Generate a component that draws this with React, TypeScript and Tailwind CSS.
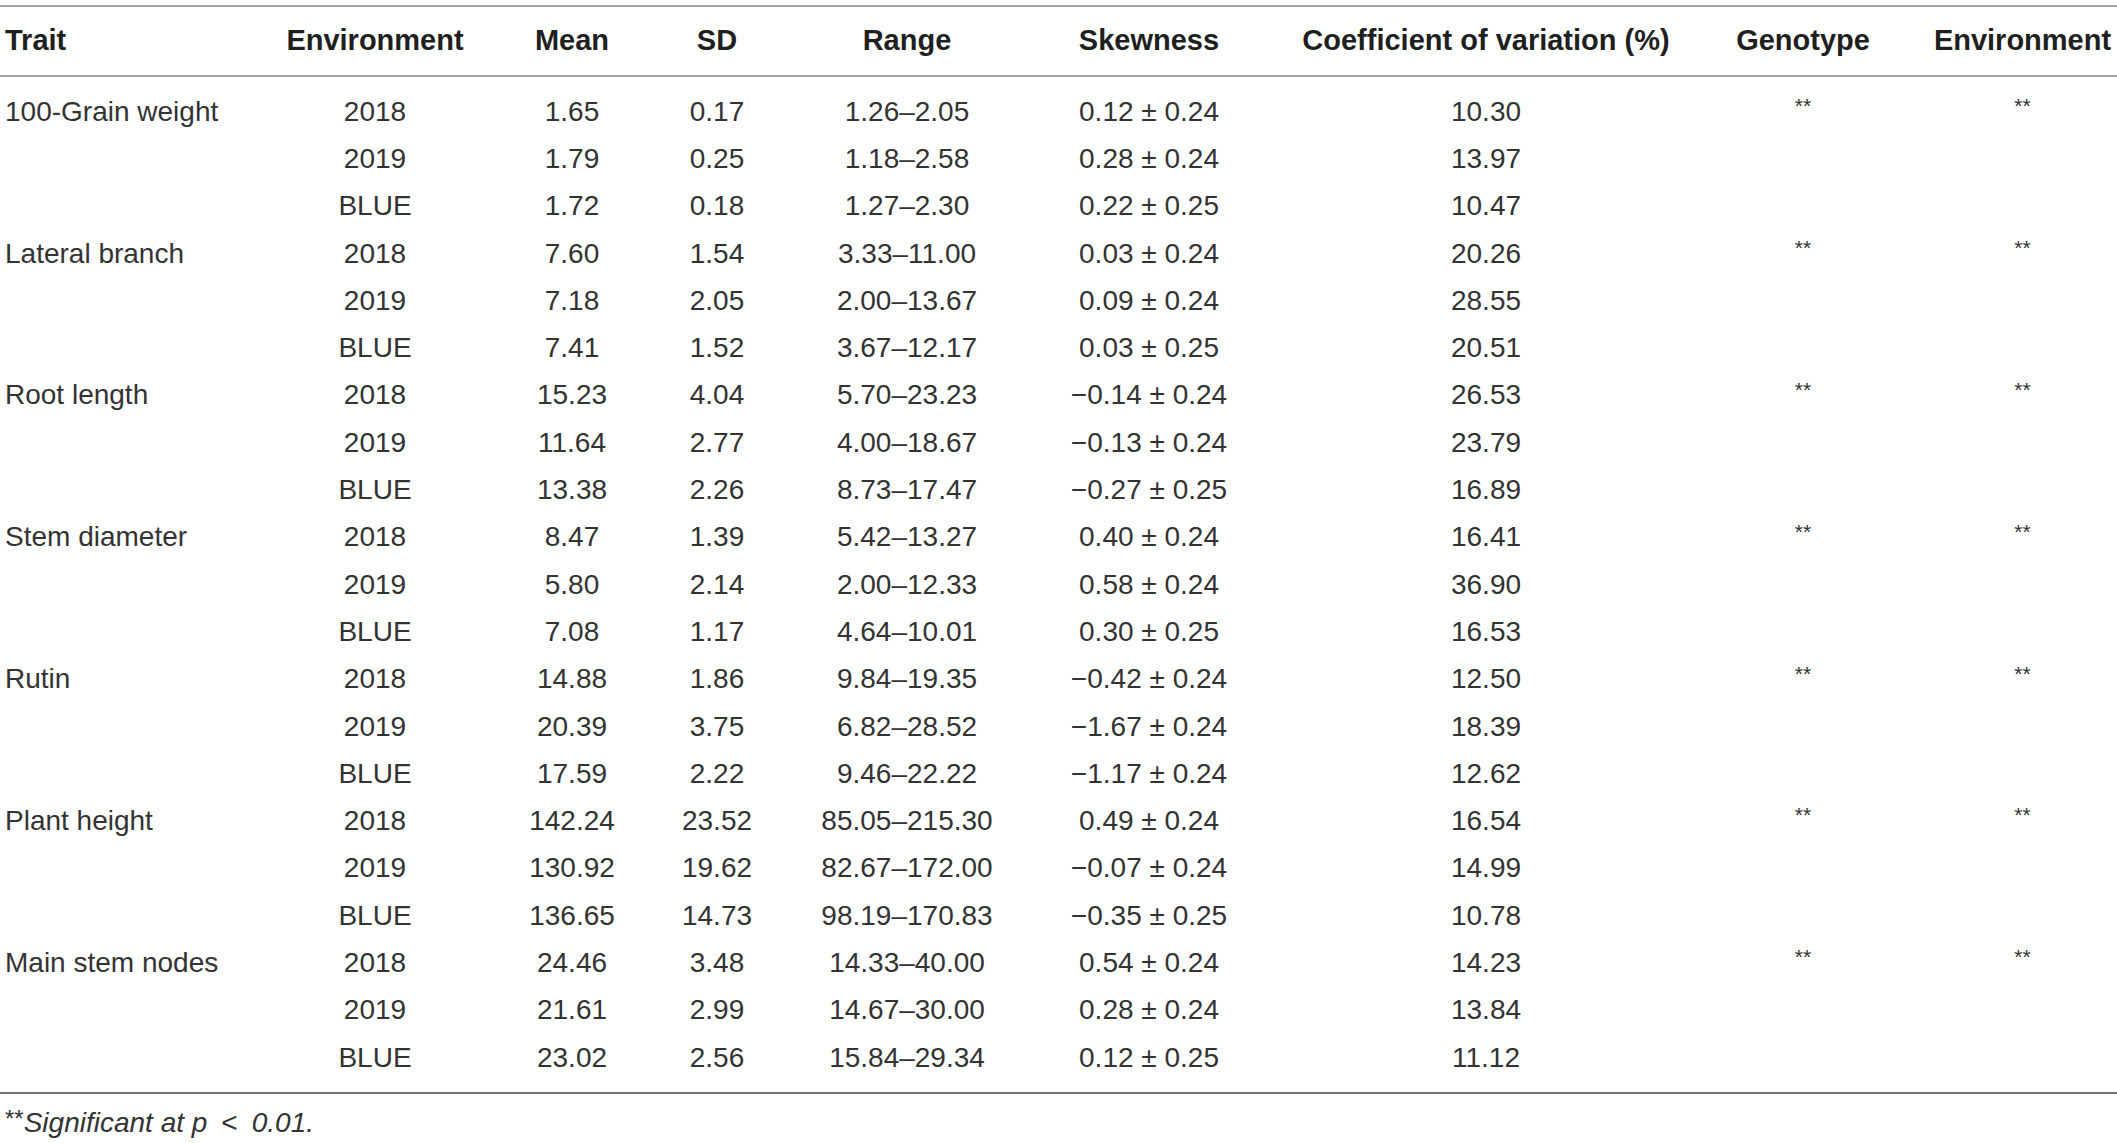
import React from 'react';

type Row = {
  trait?: string;
  env: string;
  mean: string;
  sd: string;
  range: string;
  skew: string;
  cv: string;
};

const mk = (trait: string, rows: string[][]): Row[] =>
  rows.map((r, i) => ({
    trait: i === 0 ? trait : undefined,
    env: r[0],
    mean: r[1],
    sd: r[2],
    range: r[3],
    skew: r[4],
    cv: r[5],
  }));

const data: Row[] = [
  ...mk('100-Grain weight', [
    ['2018', '1.65', '0.17', '1.26–2.05', '0.12 ± 0.24', '10.30'],
    ['2019', '1.79', '0.25', '1.18–2.58', '0.28 ± 0.24', '13.97'],
    ['BLUE', '1.72', '0.18', '1.27–2.30', '0.22 ± 0.25', '10.47'],
  ]),
  ...mk('Lateral branch', [
    ['2018', '7.60', '1.54', '3.33–11.00', '0.03 ± 0.24', '20.26'],
    ['2019', '7.18', '2.05', '2.00–13.67', '0.09 ± 0.24', '28.55'],
    ['BLUE', '7.41', '1.52', '3.67–12.17', '0.03 ± 0.25', '20.51'],
  ]),
  ...mk('Root length', [
    ['2018', '15.23', '4.04', '5.70–23.23', '−0.14 ± 0.24', '26.53'],
    ['2019', '11.64', '2.77', '4.00–18.67', '−0.13 ± 0.24', '23.79'],
    ['BLUE', '13.38', '2.26', '8.73–17.47', '−0.27 ± 0.25', '16.89'],
  ]),
  ...mk('Stem diameter', [
    ['2018', '8.47', '1.39', '5.42–13.27', '0.40 ± 0.24', '16.41'],
    ['2019', '5.80', '2.14', '2.00–12.33', '0.58 ± 0.24', '36.90'],
    ['BLUE', '7.08', '1.17', '4.64–10.01', '0.30 ± 0.25', '16.53'],
  ]),
  ...mk('Rutin', [
    ['2018', '14.88', '1.86', '9.84–19.35', '−0.42 ± 0.24', '12.50'],
    ['2019', '20.39', '3.75', '6.82–28.52', '−1.67 ± 0.24', '18.39'],
    ['BLUE', '17.59', '2.22', '9.46–22.22', '−1.17 ± 0.24', '12.62'],
  ]),
  ...mk('Plant height', [
    ['2018', '142.24', '23.52', '85.05–215.30', '0.49 ± 0.24', '16.54'],
    ['2019', '130.92', '19.62', '82.67–172.00', '−0.07 ± 0.24', '14.99'],
    ['BLUE', '136.65', '14.73', '98.19–170.83', '−0.35 ± 0.25', '10.78'],
  ]),
  ...mk('Main stem nodes', [
    ['2018', '24.46', '3.48', '14.33–40.00', '0.54 ± 0.24', '14.23'],
    ['2019', '21.61', '2.99', '14.67–30.00', '0.28 ± 0.24', '13.84'],
    ['BLUE', '23.02', '2.56', '15.84–29.34', '0.12 ± 0.25', '11.12'],
  ]),
];

// column widths chosen so the centred values line up with the source table
const cols =
  'grid grid-cols-[270px_210px_184px_106px_274px_210px_464px_210px_189px]';

const Stars = () => (
  <span className="align-super text-[21px] leading-none">**</span>
);

export default function App() {
  return (
    <div
      className="w-[2117px] min-h-[1143px] bg-white text-[#333333]"
      style={{ fontFamily: '"Liberation Sans", Arial, sans-serif' }}
    >
      <div className="pt-[5px]">
        {/* header */}
        <div
          className={`${cols} h-[72px] items-center border-y-2 border-[#a5a5a5] text-[29px] font-bold text-[#1f1f1f]`}
        >
          <div className="pl-[5px]">Trait</div>
          <div className="text-center">Environment</div>
          <div className="text-center">Mean</div>
          <div className="text-center">SD</div>
          <div className="text-center">Range</div>
          <div className="text-center">Skewness</div>
          <div className="text-center whitespace-nowrap">Coefficient of variation (%)</div>
          <div className="pr-[40px] text-center">Genotype</div>
          <div className="text-center">Environment</div>
        </div>

        {/* body */}
        <div className="border-b-2 border-[#707070] py-[11px]">
          {data.map((r, i) => (
            <div
              key={i}
              className={`${cols} h-[47.3px] items-center text-[28px] leading-none`}
            >
              <div className="pl-[5px] whitespace-nowrap">{r.trait ?? ''}</div>
              <div className="text-center">{r.env}</div>
              <div className="text-center">{r.mean}</div>
              <div className="text-center">{r.sd}</div>
              <div className="text-center">{r.range}</div>
              <div className="text-center whitespace-nowrap">{r.skew}</div>
              <div className="text-center">{r.cv}</div>
              <div className="pr-[40px] text-center">{r.trait ? <Stars /> : null}</div>
              <div className="text-center">{r.trait ? <Stars /> : null}</div>
            </div>
          ))}
        </div>

        {/* footnote */}
        <div className="pl-[5px] pt-[12px] text-[28px] leading-[34px]">
          <span className="relative -top-[5px] text-[24px]">**</span>
          <span className="italic">Significant at p</span>
          <span className="mx-[14px]">&lt;</span>
          <span className="italic">0.01.</span>
        </div>
      </div>
    </div>
  );
}
